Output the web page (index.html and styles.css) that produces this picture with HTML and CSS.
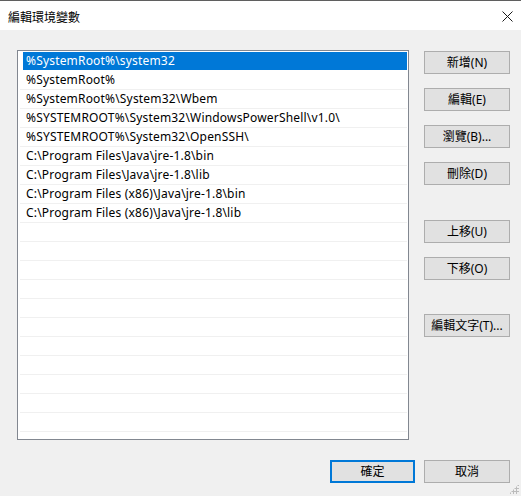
FILE: index.html
```html
<!DOCTYPE html>
<html lang="zh-Hant">
<head>
  <meta charset="UTF-8">
  <title>編輯環境變數</title>
  <link rel="stylesheet" href="styles.css">
</head>
<body>
  <div class="dialog">

    <!-- Title bar -->
    <div class="titlebar">
      <span class="title">編輯環境變數</span>
      <svg class="close" width="11" height="11" viewBox="0 0 11 11">
        <path d="M0.5 0.5 L10.5 10.5 M10.5 0.5 L0.5 10.5" stroke="#1a1a1a" stroke-width="1" fill="none"/>
      </svg>
    </div>

    <!-- Body -->
    <div class="content">
      <div class="main">
        <div class="listbox">
          <div class="row selected"><span class="cell">%SystemRoot%\system32</span></div>
          <div class="row"><span class="cell">%SystemRoot%</span></div>
          <div class="row"><span class="cell">%SystemRoot%\System32\Wbem</span></div>
          <div class="row"><span class="cell">%SYSTEMROOT%\System32\WindowsPowerShell\v1.0\</span></div>
          <div class="row"><span class="cell">%SYSTEMROOT%\System32\OpenSSH\</span></div>
          <div class="row"><span class="cell">C:\Program Files\Java\jre-1.8\bin</span></div>
          <div class="row"><span class="cell">C:\Program Files\Java\jre-1.8\lib</span></div>
          <div class="row"><span class="cell">C:\Program Files (x86)\Java\jre-1.8\bin</span></div>
          <div class="row"><span class="cell">C:\Program Files (x86)\Java\jre-1.8\lib</span></div>
          <div class="row"><span class="cell"></span></div>
          <div class="row"><span class="cell"></span></div>
          <div class="row"><span class="cell"></span></div>
          <div class="row"><span class="cell"></span></div>
          <div class="row"><span class="cell"></span></div>
          <div class="row"><span class="cell"></span></div>
          <div class="row"><span class="cell"></span></div>
          <div class="row"><span class="cell"></span></div>
          <div class="row"><span class="cell"></span></div>
          <div class="row"><span class="cell"></span></div>
          <div class="row"><span class="cell"></span></div>
          <div class="row"><span class="cell"></span></div>
        </div>

        <div class="side">
          <div class="group">
            <button class="btn">新增(N)</button>
            <button class="btn">編輯(E)</button>
            <button class="btn">瀏覽(B)...</button>
            <button class="btn">刪除(D)</button>
          </div>
          <div class="group">
            <button class="btn">上移(U)</button>
            <button class="btn">下移(O)</button>
          </div>
          <div class="group">
            <button class="btn">編輯文字(T)...</button>
          </div>
        </div>
      </div>

      <div class="footer">
        <button class="btn default">確定</button>
        <button class="btn">取消</button>
      </div>
    </div>

    <!-- Resize grip -->
    <div class="grip"></div>
  </div>
</body>
</html>
```

FILE: styles.css
```css
* {
  margin: 0;
  padding: 0;
  box-sizing: border-box;
}

body {
  background-color: #f0f0f0;
  font-family: "Noto Sans", "Noto Sans CJK TC", sans-serif;
  font-size: 12px;
  color: #000;
}

.dialog {
  position: relative;
  width: 521px;
  height: 496px;
  border-top: 1px solid #5f5f5f;
  background-color: #f0f0f0;
  overflow: hidden;
}

/* Title bar */
.titlebar {
  height: 29px;
  background-color: #fff;
  display: flex;
  align-items: center;
  justify-content: space-between;
  padding: 0 7px 0 8px;
}

.title {
  font-family: "Noto Sans CJK TC", sans-serif;
  font-size: 12px;
  color: #000;
  margin-top: 2px;
}

.close {
  margin-top: 1px;
  margin-right: 1px;
}

/* Body */
.content {
  padding: 20px 11px 0 17px;
}

.main {
  display: flex;
  gap: 15px;
}

.listbox {
  width: 392px;
  height: 390px;
  background-color: #fff;
  border: 1px solid #828790;
  padding: 1px 1px 0 2px;
  overflow: hidden;
}

.row {
  height: 19px;
  border-bottom: 1px solid #f0f0f0;
  padding-left: 3px;
}

.cell {
  display: block;
  height: 18px;
  line-height: 18px;
  padding-left: 3px;
  white-space: nowrap;
  letter-spacing: 0.18px;
}

.row.selected {
  border-bottom-color: #fff;
}

.row.selected .cell {
  background-color: #0078d7;
  color: #fff;
}

/* Buttons */
.side {
  display: flex;
  flex-direction: column;
  gap: 35px;
  padding-top: 1px;
}

.group {
  display: flex;
  flex-direction: column;
  gap: 14px;
}

.side .group:last-child {
  margin-top: -1px;
}

.btn {
  width: 86px;
  height: 23px;
  background-color: #e1e1e1;
  border: 1px solid #adadad;
  font-family: "Noto Sans", "Noto Sans CJK TC", sans-serif;
  font-size: 12px;
  color: #000;
  line-height: 20px;
}

.btn.default {
  border: 2px solid #0078d7;
  width: 85px;
}

.footer {
  display: flex;
  justify-content: flex-end;
  gap: 9px;
  margin-top: 20px;
}

/* Resize grip */
.grip {
  position: absolute;
  right: 2px;
  bottom: 2px;
  width: 10px;
  height: 10px;
  background-image: radial-gradient(circle, #bcbcbc 1px, transparent 1.2px);
  background-size: 3px 3px;
  clip-path: polygon(100% 0, 100% 100%, 0 100%);
}
```
